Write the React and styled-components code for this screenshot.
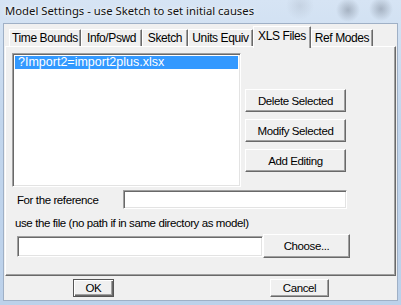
import React from 'react';
import styled, { createGlobalStyle } from 'styled-components';

const Global = createGlobalStyle`
  html, body { margin: 0; padding: 0; background: #c3d6ec; }
  body { width: 401px; height: 305px; overflow: hidden; }
  * { box-sizing: border-box; }
`;

const uiFont = `"Liberation Sans", Arial, sans-serif`;

const Window = styled.div`
  width: 401px;
  height: 305px;
  display: flex;
  flex-direction: column;
  padding: 0 3px 4px 3px;
  background:
    radial-gradient(circle at 348px 10px, rgba(110, 120, 135, 0.45), rgba(110, 120, 135, 0) 12px),
    radial-gradient(circle at 381px 9px, rgba(110, 120, 135, 0.45), rgba(110, 120, 135, 0) 12px),
    radial-gradient(circle at 300px 6px, rgba(150, 160, 175, 0.25), rgba(150, 160, 175, 0) 14px),
    linear-gradient(180deg, #d6e4f4 0%, #c2d6ed 40%, #bcd1ea 100%);
`;

const TitleBar = styled.div`
  height: 23px;
  display: flex;
  align-items: center;
  padding: 0 0 2px 2px;
  font-family: "Noto Sans", "Open Sans", sans-serif;
  font-size: 11.3px;
  color: #111;
  text-shadow: 0 0 6px rgba(255, 255, 255, 0.9), 0 0 2px rgba(255, 255, 255, 0.8);
  white-space: nowrap;
`;

const Client = styled.div`
  flex: 1;
  display: flex;
  flex-direction: column;
  background: #f0f0f0;
  border: 1px solid #9fb0c6;
  padding: 2px 1px 0 1px;
  font-family: ${uiFont};
  font-size: 11.5px;
  letter-spacing: -0.4px;
  color: #000;
`;

const TabRow = styled.div`
  height: 20px;
  display: flex;
  align-items: flex-end;
  padding-left: 4px;
`;

const Tab = styled.div`
  width: ${(p) => p.$w}px;
  height: ${(p) => (p.$active ? 22 : 17)}px;
  margin-bottom: ${(p) => (p.$active ? -2 : 0)}px;
  position: relative;
  z-index: ${(p) => (p.$active ? 2 : 0)};
  display: flex;
  align-items: center;
  justify-content: center;
  padding-bottom: ${(p) => (p.$active ? 4 : 0)}px;
  background: #f0f0f0;
  border-top: 1px solid #fff;
  border-left: 1px solid #fff;
  border-right: 1px solid #696969;
  border-top-right-radius: 1px;
  box-shadow: inset -1px 0 #a0a0a0;
  font-size: 12px;
  white-space: nowrap;
`;

const Panel = styled.div`
  height: 230px;
  position: relative;
  z-index: 1;
  background: #f0f0f0;
  border-top: 1px solid #fff;
  border-left: 1px solid #fff;
  border-right: 1px solid #696969;
  border-bottom: 1px solid #696969;
  box-shadow: inset -1px -1px #a0a0a0;
  padding: 6px 0 0 6px;
  display: flex;
  flex-direction: column;
`;

const TopSection = styled.div`
  display: flex;
`;

const Sunken = styled.div`
  background: #fff;
  border-top: 1px solid #a0a0a0;
  border-left: 1px solid #a0a0a0;
  border-right: 1px solid #fff;
  border-bottom: 1px solid #fff;
  box-shadow: inset 1px 1px #696969, inset -1px -1px #e3e3e3;
`;

const ListBox = styled(Sunken)`
  width: 229px;
  height: 134px;
  padding: 2px;
`;

const ListItem = styled.div`
  height: 13px;
  line-height: 13px;
  padding-left: 3px;
  font-size: 12.5px;
  letter-spacing: 0;
  background: ${(p) => (p.$selected ? '#3399ff' : 'transparent')};
  color: ${(p) => (p.$selected ? '#fff' : '#000')};
  white-space: nowrap;
`;

const ButtonColumn = styled.div`
  display: flex;
  flex-direction: column;
  gap: 7px;
  margin-left: 4px;
  padding-top: 36px;
`;

const Button = styled.button`
  width: ${(p) => p.$w}px;
  height: ${(p) => p.$h || 23}px;
  margin: 0;
  padding: 0;
  font-family: ${uiFont};
  font-size: 11.5px;
  letter-spacing: -0.4px;
  color: #000;
  background: #f0f0f0;
  border-top: 1px solid #fff;
  border-left: 1px solid #fff;
  border-right: 1px solid #696969;
  border-bottom: 1px solid #696969;
  box-shadow: inset -1px -1px #a0a0a0;
  white-space: nowrap;
`;

const DefaultButton = styled(Button)`
  border: 1px solid #555;
  box-shadow: inset 1px 1px #fff, inset -1px -1px #696969, inset -2px -2px #a0a0a0;
`;

const RefRow = styled.div`
  display: flex;
  align-items: center;
  margin-top: 3px;
  height: 19px;
`;

const Label = styled.span`
  width: ${(p) => p.$w || 'auto'};
  padding-left: ${(p) => p.$indent || 0}px;
  white-space: nowrap;
`;

const TextInput = styled(Sunken)`
  width: ${(p) => p.$w}px;
  height: ${(p) => p.$h}px;
`;

const Hint = styled.div`
  margin-top: 7px;
  height: 14px;
  line-height: 14px;
  padding-left: 3px;
  white-space: nowrap;
`;

const FileRow = styled.div`
  display: flex;
  align-items: center;
  margin-top: 4px;
  padding-left: 5px;
  height: 24px;
`;

const Footer = styled.div`
  flex: 1;
  display: flex;
  align-items: center;
  padding-left: 68px;
  padding-bottom: 1px;
  gap: 156px;
`;

const tabs = [
  { label: 'Time Bounds', w: 72 },
  { label: 'Info/Pswd', w: 61 },
  { label: 'Sketch', w: 46 },
  { label: 'Units Equiv', w: 65 },
  { label: 'XLS Files', w: 58, active: true },
  { label: 'Ref Modes', w: 62 },
];

export default function App() {
  return (
    <>
      <Global />
      <Window>
        <TitleBar>Model Settings - use Sketch to set initial causes</TitleBar>
        <Client>
          <TabRow>
            {tabs.map((t) => (
              <Tab key={t.label} $w={t.w} $active={t.active}>
                {t.label}
              </Tab>
            ))}
          </TabRow>
          <Panel>
            <TopSection>
              <ListBox>
                <ListItem $selected>?Import2=import2plus.xlsx</ListItem>
              </ListBox>
              <ButtonColumn>
                <Button $w={101}>Delete Selected</Button>
                <Button $w={101}>Modify Selected</Button>
                <Button $w={101}>Add Editing</Button>
              </ButtonColumn>
            </TopSection>
            <RefRow>
              <Label $w="111px" $indent={5}>For the reference</Label>
              <TextInput $w={224} $h={19} />
            </RefRow>
            <Hint>use the file (no path if in same directory as model)</Hint>
            <FileRow>
              <TextInput $w={246} $h={21} />
              <Button $w={87} $h={24}>Choose...</Button>
            </FileRow>
          </Panel>
          <Footer>
            <DefaultButton $w={41} $h={18}>OK</DefaultButton>
            <Button $w={59} $h={18}>Cancel</Button>
          </Footer>
        </Client>
      </Window>
    </>
  );
}
